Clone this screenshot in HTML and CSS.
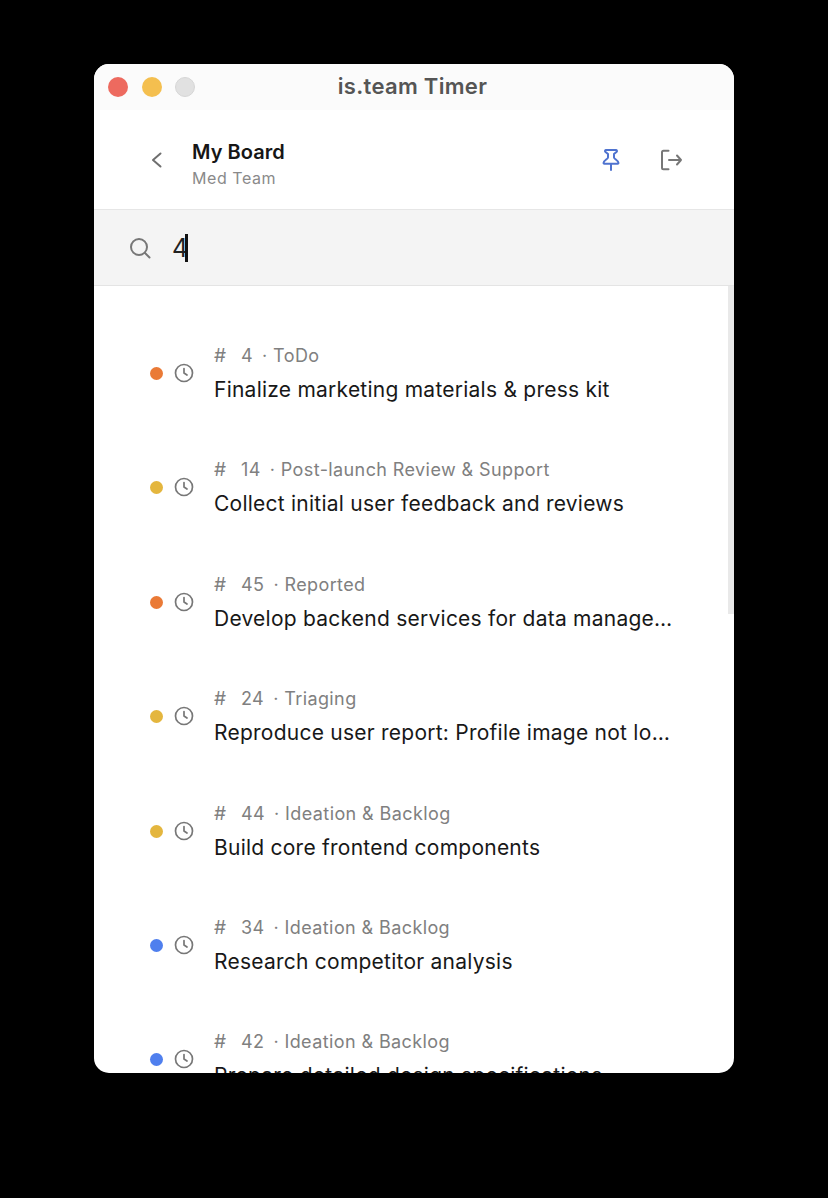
FILE: index.html
```html
<!DOCTYPE html>
<html lang="en">
<head>
<meta charset="utf-8">
<title>is.team Timer</title>
<link rel="stylesheet" href="styles.css">
</head>
<body>
<main class="window">
  <div class="titlebar">
    <div class="lights">
      <span class="light red"></span>
      <span class="light yellow"></span>
      <span class="light grey"></span>
    </div>
    <div class="window-title">is.team Timer</div>
  </div>
  <header class="header">
    <svg class="back" width="24" height="24" viewBox="0 0 24 24"><path d="M16.500 5.500L9 12l7.500 6.500"/></svg>
    <div class="board">
      <div class="board-name">My Board</div>
      <div class="board-team">Med Team</div>
    </div>
    <svg class="pin" width="24" height="24" viewBox="0 0 24 24"><path d="M7 2h10a1 1 0 0 1 .7 1.700L15 6v3.500c0 1.500 4.500 3 4.500 5.500a.8.8 0 0 1-.8.8H5.300a.8.8 0 0 1-.8-.8c0-2.500 4.500-4 4.500-5.500V6L6.300 3.700A1 1 0 0 1 7 2zM12 15.800V22"/></svg>
    <svg class="logout" width="24" height="24" viewBox="0 0 24 24"><path d="M9.500 2.800H4.500A1.500 1.500 0 0 0 3 4.300v15.400a1.500 1.500 0 0 0 1.500 1.500h5M10 12h12M18 7.500l4 4.500-4 4.500"/></svg>
  </header>
  <div class="search">
    <svg class="search-icon" width="24" height="24" viewBox="0 0 24 24"><circle cx="11" cy="11" r="8"/><path d="M17 17l4.500 4.500"/></svg>
    <span class="query">4</span><span class="caret"></span>
  </div>
  <div class="list-wrap">
    <ul class="list">
      <li class="row">
        <span class="dot orange"></span>
        <svg class="clock" width="20" height="20" viewBox="0 0 20 20"><circle cx="10" cy="10" r="8.500"/><path d="M10 5.500V10l3 2"/></svg>
        <div class="info"><div class="meta"><span class="hash">#</span><span class="num">4</span><span>· ToDo</span></div><div class="name">Finalize marketing materials &amp; press kit</div></div>
      </li>
      <li class="row">
        <span class="dot yellow-dot"></span>
        <svg class="clock" width="20" height="20" viewBox="0 0 20 20"><circle cx="10" cy="10" r="8.500"/><path d="M10 5.500V10l3 2"/></svg>
        <div class="info"><div class="meta"><span class="hash">#</span><span class="num">14</span><span>· Post-launch Review &amp; Support</span></div><div class="name">Collect initial user feedback and reviews</div></div>
      </li>
      <li class="row">
        <span class="dot orange"></span>
        <svg class="clock" width="20" height="20" viewBox="0 0 20 20"><circle cx="10" cy="10" r="8.500"/><path d="M10 5.500V10l3 2"/></svg>
        <div class="info"><div class="meta"><span class="hash">#</span><span class="num">45</span><span>· Reported</span></div><div class="name">Develop backend services for data management</div></div>
      </li>
      <li class="row">
        <span class="dot yellow-dot"></span>
        <svg class="clock" width="20" height="20" viewBox="0 0 20 20"><circle cx="10" cy="10" r="8.500"/><path d="M10 5.500V10l3 2"/></svg>
        <div class="info"><div class="meta"><span class="hash">#</span><span class="num">24</span><span>· Triaging</span></div><div class="name">Reproduce user report: Profile image not loading</div></div>
      </li>
      <li class="row">
        <span class="dot yellow-dot"></span>
        <svg class="clock" width="20" height="20" viewBox="0 0 20 20"><circle cx="10" cy="10" r="8.500"/><path d="M10 5.500V10l3 2"/></svg>
        <div class="info"><div class="meta"><span class="hash">#</span><span class="num">44</span><span>· Ideation &amp; Backlog</span></div><div class="name">Build core frontend components</div></div>
      </li>
      <li class="row">
        <span class="dot blue"></span>
        <svg class="clock" width="20" height="20" viewBox="0 0 20 20"><circle cx="10" cy="10" r="8.500"/><path d="M10 5.500V10l3 2"/></svg>
        <div class="info"><div class="meta"><span class="hash">#</span><span class="num">34</span><span>· Ideation &amp; Backlog</span></div><div class="name">Research competitor analysis</div></div>
      </li>
      <li class="row">
        <span class="dot blue"></span>
        <svg class="clock" width="20" height="20" viewBox="0 0 20 20"><circle cx="10" cy="10" r="8.500"/><path d="M10 5.500V10l3 2"/></svg>
        <div class="info"><div class="meta"><span class="hash">#</span><span class="num">42</span><span>· Ideation &amp; Backlog</span></div><div class="name">Prepare detailed design specifications</div></div>
      </li>
    </ul>
    <div class="scrollbar"></div>
  </div>
</main>
</body>
</html>
```
FILE: styles.css
```css
* { box-sizing: border-box; }
html, body { margin: 0; height: 100%; }
body {
  background: #000;
  padding: 64px 94px 0 94px;
  font-family: Inter, "Liberation Sans", sans-serif;
  overflow: hidden;
}
.window {
  width: 640px;
  height: 1009px;
  background: #fff;
  border-radius: 15px;
  overflow: hidden;
  display: flex;
  flex-direction: column;
}
.titlebar {
  height: 46px;
  flex: none;
  background: #fbfbfb;
  position: relative;
  display: flex;
  align-items: center;
  justify-content: center;
}
.lights {
  position: absolute;
  left: 14px;
  top: 13px;
  display: flex;
  gap: 13.500px;
}
.light { width: 20px; height: 20px; border-radius: 50%; }
.red { background: #ed6a5f; }
.yellow { background: #f4bf4f; }
.grey { background: #e1e1e1; border: 1px solid #d6d6d6; }
.window-title { font-size: 22px; font-weight: 600; color: #555; letter-spacing: 0.3px; margin-top: -2px; margin-left: -3px; }
.header {
  height: 100px;
  flex: none;
  display: flex;
  align-items: center;
  padding: 0 51px 0 50px;
  border-bottom: 1px solid #e6e6e6;
}
.back { fill: none; stroke: #6f6f6f; stroke-width: 2; stroke-linecap: round; stroke-linejoin: round; margin-right: 24px; }
.board { flex: 1; padding-top: 9px; }
.board-name { font-size: 20px; font-weight: 600; color: #161616; line-height: 26px; letter-spacing: 0.05px; }
.board-team { font-size: 16px; color: #8a8a8a; line-height: 22px; margin-top: 2px; letter-spacing: 0.55px; }
.pin { fill: none; stroke: #4f73cf; stroke-width: 2; stroke-linecap: round; stroke-linejoin: round; margin-right: 36px; }
.logout { fill: none; stroke: #777; stroke-width: 2; stroke-linecap: round; stroke-linejoin: round; }
.search {
  height: 76px;
  flex: none;
  background: #f4f4f4;
  border-bottom: 1px solid #e4e4e4;
  display: flex;
  align-items: center;
  padding-left: 34px;
}
.search-icon { fill: none; stroke: #777; stroke-width: 2; stroke-linecap: round; margin-right: 20px; }
.query { font-size: 25px; color: #222; }
.caret { width: 3px; height: 28px; background: #111; margin-left: -3px; }
.list-wrap { flex: 1; position: relative; overflow: hidden; min-height: 0; }
.list { list-style: none; margin: 0; padding: 58px 60px 0 56px; }
.row { height: 114.400px; display: flex; align-items: flex-start; }
.dot { width: 13px; height: 13px; border-radius: 50%; flex: none; margin-top: 23px; }
.orange { background: #ea7a36; }
.yellow-dot { background: #e4b63e; }
.blue { background: #4f7fee; }
.clock { flex: none; fill: none; stroke: #777; stroke-width: 1.700; stroke-linecap: round; stroke-linejoin: round; margin: 19px 0 0 11px; }
.info { margin-left: 20px; min-width: 0; flex: 1; }
.meta { font-size: 18px; color: #808080; line-height: 24px; display: flex; white-space: nowrap; letter-spacing: 0.4px; }
.hash { width: 27px; font-size: 19px; }
.num { margin-right: 9px; }
.name { font-size: 21px; color: #181818; line-height: 28px; margin-top: 8px; letter-spacing: 0.24px; white-space: nowrap; overflow: hidden; text-overflow: ellipsis; }
.scrollbar { position: absolute; right: 0; top: 0; width: 6px; height: 328px; background: #e9e9e9; }
```
